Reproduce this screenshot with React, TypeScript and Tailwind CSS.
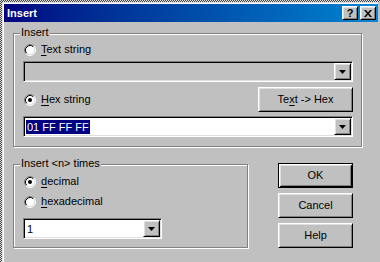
import React from 'react';

const raised =
  'border border-t-white border-l-white border-r-black border-b-black shadow-[inset_1px_1px_0_#dfdfdf,inset_-1px_-1px_0_#808080]';
const sunken =
  'border border-t-[#808080] border-l-[#808080] border-r-white border-b-white shadow-[inset_1px_1px_0_#000,inset_-1px_-1px_0_#dfdfdf]';

const Radio: React.FC<{ checked?: boolean }> = ({ checked }) => (
  <svg width="12" height="12" viewBox="0 0 12 12" className="shrink-0">
    <circle cx="6" cy="6" r="5" fill="#fff" />
    <path d="M2.11 9.89A5.5 5.5 0 0 1 9.89 2.11" stroke="#808080" fill="none" />
    <path d="M9.89 2.11A5.5 5.5 0 0 1 2.11 9.89" stroke="#fff" fill="none" />
    <path d="M2.82 9.18A4.5 4.5 0 0 1 9.18 2.82" stroke="#000" fill="none" />
    <path d="M9.18 2.82A4.5 4.5 0 0 1 2.82 9.18" stroke="#dfdfdf" fill="none" />
    {checked && <circle cx="6" cy="6" r="2" fill="#000" />}
  </svg>
);

const RadioRow: React.FC<{ checked?: boolean; children: React.ReactNode }> = ({ checked, children }) => (
  <div className="flex items-center h-[13px] ml-[1px] gap-[5px]">
    <Radio checked={checked} />
    <span className="leading-[13px]">{children}</span>
  </div>
);

const ArrowButton = () => (
  <div className={`${raised} w-[17px] h-full flex items-center justify-center shrink-0`}>
    <svg width="7" height="4" viewBox="0 0 7 4">
      <path d="M0 0h7L3.5 4z" fill="#000" />
    </svg>
  </div>
);

const Combo: React.FC<{ className: string; disabled?: boolean; children?: React.ReactNode }> = ({
  className,
  disabled,
  children,
}) => (
  <div className={`${sunken} ${className} h-[21px] p-[1px] flex`}>
    <div className={`flex-1 flex items-center pl-[1px] ${disabled ? 'bg-[#c0c0c0]' : 'bg-white'}`}>{children}</div>
    <ArrowButton />
  </div>
);

const PushButton: React.FC<{ className?: string; isDefault?: boolean; children: React.ReactNode }> = ({
  className = '',
  isDefault,
  children,
}) => (
  <div
    className={`${
      isDefault
        ? 'border border-black shadow-[inset_1px_1px_0_#fff,inset_-1px_-1px_0_#000,inset_2px_2px_0_#dfdfdf,inset_-2px_-2px_0_#808080]'
        : raised
    } h-[25px] flex items-center justify-center ${className}`}
  >
    {children}
  </div>
);

const GroupBox: React.FC<{ label: string; className: string; children: React.ReactNode }> = ({
  label,
  className,
  children,
}) => (
  <div className={`relative border border-[#808080] shadow-[inset_1px_1px_0_#fff,1px_1px_0_#fff] ${className}`}>
    <span className="absolute left-[6px] top-[-8px] px-[1px] bg-[#c0c0c0] leading-[13px]">{label}</span>
    {children}
  </div>
);

const U: React.FC<{ children: React.ReactNode }> = ({ children }) => (
  <span className="underline underline-offset-[2px]">{children}</span>
);

export default function App() {
  return (
    <div className="w-[380px] h-[262px] overflow-hidden bg-[repeating-conic-gradient(#404040_0_25%,#e0e0e0_0_50%)] bg-[length:2px_2px] pl-[2px] pt-[2px] font-['Liberation_Sans',Arial,sans-serif] text-[11px] text-black">
      <div className="w-[378px] h-[262px] bg-[#c0c0c0] border-l border-t border-l-[#dfdfdf] border-t-[#dfdfdf] border-r-2 border-r-[#c0c0c0] shadow-[inset_1px_1px_0_#fff]">
        <div className="ml-[1px] mt-[1px] h-[18px] bg-linear-to-r from-[#000080] to-[#1084d0] flex items-center pl-[3px] pr-[2px]">
          <span className="flex-1 text-white font-bold text-[11px] leading-[13px]">Insert</span>
          <div className={`${raised} w-[16px] h-[14px] flex items-center justify-center bg-[#c0c0c0]`}>
            <span className="font-bold text-[11px] leading-[10px]">?</span>
          </div>
          <div className={`${raised} w-[16px] h-[14px] ml-[2px] flex items-center justify-center bg-[#c0c0c0]`}>
            <svg width="8" height="7" viewBox="0 0 8 7">
              <path d="M0 0h2l2 2.5L6 0h2L5 3.5 8 7H6L4 4.5 2 7H0l3-3.5z" fill="#000" />
            </svg>
          </div>
        </div>

        <div className="pl-[10px] pt-[11px]">
          <GroupBox label="Insert" className="w-[349px] h-[114px] pl-[9px] pr-[8px] pt-[9px]">
            <RadioRow>
              <U>T</U>ext string
            </RadioRow>
            <Combo className="mt-[5px] w-full" disabled />
            <div className="mt-[5px] flex items-center justify-between">
              <RadioRow checked>
                <U>H</U>ex string
              </RadioRow>
              <PushButton className="w-[95px]">
                Te<U>x</U>t -&gt; Hex
              </PushButton>
            </div>
            <Combo className="mt-[4px] w-full">
              <span className="bg-[#000080] text-white leading-[14px] px-[1px]">01 FF FF FF</span>
            </Combo>
          </GroupBox>

          <div className="mt-[16px] flex items-start">
            <GroupBox label="Insert <n> times" className="mt-[1px] w-[235px] h-[84px] pl-[9px] pt-[10px]">
              <RadioRow checked>
                <U>d</U>ecimal
              </RadioRow>
              <div className="mt-[7px]">
                <RadioRow>
                  <U>h</U>exadecimal
                </RadioRow>
              </div>
              <Combo className="mt-[10px] w-[139px]">
                <span className="leading-[14px] px-[1px]">1</span>
              </Combo>
            </GroupBox>
            <div className="ml-[30px] w-[75px] flex flex-col gap-[5px]">
              <PushButton isDefault>OK</PushButton>
              <PushButton>Cancel</PushButton>
              <PushButton>Help</PushButton>
            </div>
          </div>
        </div>
      </div>
    </div>
  );
}
